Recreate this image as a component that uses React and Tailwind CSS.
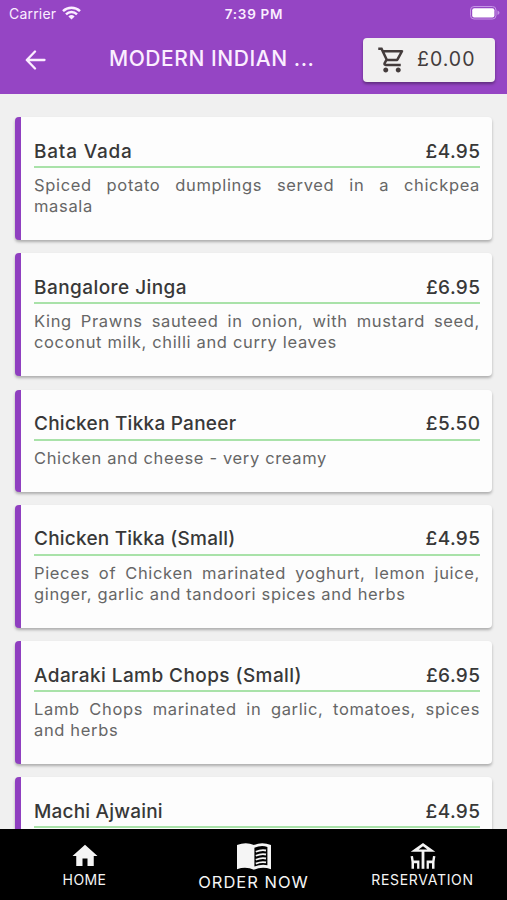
import React from "react";
import { MdOutlineShoppingCart, MdHome } from "react-icons/md";

const dishes = [
  { name: "Bata Vada", price: "£4.95", lines: ["Spiced potato dumplings served in a chickpea", "masala"], nt: "tracking-[0.8px]", h: "h-[123px]" },
  { name: "Bangalore Jinga", price: "£6.95", lines: ["King Prawns sauteed in onion, with mustard seed,", "coconut milk, chilli and curry leaves"], nt: "tracking-[0.44px]", h: "h-[123px]" },
  { name: "Chicken Tikka Paneer", price: "£5.50", lines: ["Chicken and cheese - very creamy"], nt: "tracking-[0.25px]", h: "h-[102px]" },
  { name: "Chicken Tikka (Small)", price: "£4.95", lines: ["Pieces of Chicken marinated yoghurt, lemon juice,", "ginger, garlic and tandoori spices and herbs"], nt: "tracking-[0.22px]", h: "h-[123px]" },
  { name: "Adaraki Lamb Chops (Small)", price: "£6.95", lines: ["Lamb Chops marinated in garlic, tomatoes, spices", "and herbs"], nt: "tracking-[0.42px]", h: "h-[123px]" },
  { name: "Machi Ajwaini", price: "£4.95", lines: [], nt: "tracking-[0.2px]", h: "h-[123px]" },
];

function StatusBar() {
  return (
    <div className="grid h-7 grid-cols-3 items-center pl-[8px] pr-[7px] text-[14px] leading-7">
      <div className="flex items-center gap-[6px] pl-px tracking-[0.2px]">
        <span>Carrier</span>
        <svg className="-mt-[2px]" width="19" height="14" viewBox="0 0 19 14" fill="none" stroke="currentColor" strokeWidth="2.5">
          <path d="M1 5.1a12.4 12.4 0 0 1 17 0" />
          <path d="M4 8.3a8 8 0 0 1 11 0" />
          <path d="M9.5 13.6 6.4 10.5a4.5 4.5 0 0 1 6.2 0z" fill="currentColor" stroke="none" />
        </svg>
      </div>
      <div className="text-center text-[13.5px] font-semibold tracking-[0.7px]">7:39 PM</div>
      <svg className="-mt-[2px] justify-self-end" width="30" height="14" viewBox="0 0 30 14">
        <rect x="0.5" y="0.5" width="25.5" height="12.5" rx="3.5" fill="none" stroke="#c595e6" />
        <rect x="2.2" y="2.2" width="22.2" height="9.2" rx="2" fill="#fff" />
        <path d="M27.5 4.5q2 .8 2 2.3t-2 2.3z" fill="#c595e6" />
      </svg>
    </div>
  );
}

function MenuBookIcon() {
  return (
    <svg width="34" height="27" viewBox="0 0 34 27">
      <path d="M0 1.9Q9 -1.6 17 1.9Q25 -1.6 34 1.9V26.2Q25 23.2 17 26.8Q9 23.2 0 26.2Z" fill="currentColor" />
      <path d="M17.4 4.8Q24 1.9 30.4 3.9V22.2Q24 21 17.4 23.5Z" fill="#000" />
      <path d="M18.8 8.8Q24 6.5 29 7.5M18.8 12.8Q24 10.5 29 11.5M18.8 16.8Q24 14.5 29 15.5M18.8 20.6Q24 18.4 29 19.4" fill="none" stroke="currentColor" strokeWidth="1.8" />
    </svg>
  );
}

function PatioIcon() {
  return (
    <svg width="26" height="26" viewBox="0 0 26 26" fill="currentColor">
      <path fillRule="evenodd" d="M13 0 25.3 8.8H.7ZM13 3.2 8.6 6.4h8.8Z" />
      <path d="M11.6 8h2.8v17.8h-2.8z" />
      <path d="M.6 13.2 3 12.9l.7 4.7h5.7v8.2H7.1v-5.6H4v5.6H1.5V19Z" />
      <path d="M25.4 13.2 23 12.9l-.7 4.7h-5.7v8.2h2.3v-5.6H22v5.6h2.5V19Z" />
    </svg>
  );
}

function Dish({ dish }) {
  return (
    <article className={`${dish.h} shrink-0 rounded-[4px] border-l-[6.5px] border-[#8f3fc0] bg-[#fdfdfd] pl-[13px] pr-3 pt-[21px] shadow-[0_2px_3px_rgba(0,0,0,0.28)]`}>
      <div className="flex h-[30px] items-center justify-between border-b-2 border-[#a9e2a9] pb-px text-[19px] font-medium leading-[26px] text-[#383838]">
        <span className={`whitespace-nowrap ${dish.nt}`}>{dish.name}</span>
        <span className="-mr-[0.4px] tracking-[0.4px]">{dish.price}</span>
      </div>
      <div className="pt-[7px] text-[16.5px] leading-[20.7px] text-[#666]">
        {dish.lines.map((line, i) => (
          <p key={line} className={`whitespace-nowrap tracking-[0.65px] ${i < dish.lines.length - 1 ? "[text-align-last:justify]" : ""}`}>{line}</p>
        ))}
      </div>
    </article>
  );
}

export default function App() {
  return (
    <div className="flex h-[900px] w-[507px] flex-col overflow-hidden bg-[#f0f0f0] font-['Inter','Liberation_Sans',sans-serif]">
      <header className="h-[94px] shrink-0 bg-[#9545c4] text-[#fbeeff]">
        <StatusBar />
        <div className="flex h-[63px] items-center pl-[25px] pr-3">
          <svg width="21" height="20" viewBox="0 0 21 20" fill="none" stroke="currentColor" strokeWidth="2.3" strokeLinecap="round" strokeLinejoin="round">
            <path d="M10 1.5 1.8 10l8.2 8.5M2.2 10h17.3" />
          </svg>
          <h1 className="ml-[63px] w-[214px] whitespace-nowrap pb-[2px] text-[21px] font-medium tracking-[0.55px]">MODERN INDIAN ...</h1>
          <button className="ml-auto flex h-[44px] w-[132px] items-center rounded-[4px] bg-[#f1f0f0] pl-[14px] text-[19.5px] text-[#443c3c] shadow-[0_2px_3px_rgba(0,0,0,0.35)]">
            <MdOutlineShoppingCart size={30} />
            <span className="ml-[10px] tracking-[1px]">£0.00</span>
          </button>
        </div>
      </header>
      <main className="flex min-h-0 flex-1 flex-col gap-[13.3px] overflow-hidden px-[15px] pt-[23px]">
        {dishes.map((d) => <Dish key={d.name} dish={d} />)}
      </main>
      <nav className="flex h-[71px] shrink-0 bg-black text-[#f5f5f5]">
        <div className="flex w-[169px] flex-col items-center pt-[12px]">
          <MdHome size={30} />
          <span className="text-[14px] leading-[18px] tracking-[0.4px]">HOME</span>
        </div>
        <div className="flex w-[169px] flex-col items-center pt-[14px]">
          <MenuBookIcon />
          <span className="mt-[4px] text-[16.5px] leading-[16px] tracking-[1px]">ORDER NOW</span>
        </div>
        <div className="flex w-[169px] flex-col items-center pt-[14px]">
          <PatioIcon />
          <span className="mt-[2px] text-[14px] leading-[18px] tracking-[0.7px]">RESERVATION</span>
        </div>
      </nav>
    </div>
  );
}
